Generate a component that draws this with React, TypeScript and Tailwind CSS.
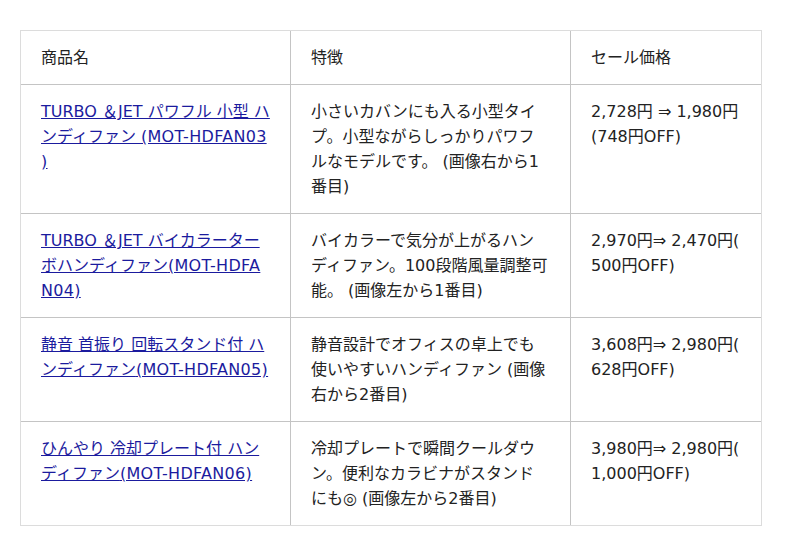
import React from "react";

type Row = { name: string; code: string; feature: string; price: string };

const rows: Row[] = [
  {
    name: "TURBO ＆JET パワフル 小型 ハンディファン ",
    code: "(MOT-HDFAN03)",
    feature: "小さいカバンにも入る小型タイプ。小型ながらしっかりパワフルなモデルです。 (画像右から1番目)",
    price: "2,728円 ⇒ 1,980円 (748円OFF)",
  },
  {
    name: "TURBO ＆JET バイカラーターボハンディファン",
    code: "(MOT-HDFAN04)",
    feature: "バイカラーで気分が上がるハンディファン。100段階風量調整可能。 (画像左から1番目)",
    price: "2,970円⇒ 2,470円(500円OFF)",
  },
  {
    name: "静音 首振り 回転スタンド付 ハンディファン",
    code: "(MOT-HDFAN05)",
    feature: "静音設計でオフィスの卓上でも使いやすいハンディファン (画像右から2番目)",
    price: "3,608円⇒ 2,980円(628円OFF)",
  },
  {
    name: "ひんやり 冷却プレート付 ハンディファン",
    code: "(MOT-HDFAN06)",
    feature: "冷却プレートで瞬間クールダウン。便利なカラビナがスタンドにも◎ (画像左から2番目)",
    price: "3,980円⇒ 2,980円(1,000円OFF)",
  },
];

const c1 = "bg-white pl-5 pr-5 py-[14px] break-all [line-break:anywhere]";
const c2 = "bg-white px-5 py-[14px] break-all";
const c3 = "bg-white pl-5 pr-5 py-[14px] break-all [line-break:anywhere]";

export default function App() {
  return (
    <div className="min-h-[556px] w-[800px] bg-white pl-[20px] pt-[30px] font-['DejaVu_Sans','Noto_Sans_CJK_JP',sans-serif] text-[16px] leading-[25px] text-[#222]">
      <div className="w-[742px] border border-[#dcdcdc]">
        <div className="grid grid-cols-[269px_279px_190px] gap-px bg-[#c4c4c4]">
          <div className={c1}>商品名</div>
          <div className={c2}>特徴</div>
          <div className={c3}>セール価格</div>
          {rows.map((r, i) => (
            <React.Fragment key={i}>
              <div className={c1}>
                <a href="#" className="text-[#1b1b9e] underline">
                  {r.name}
                  <span className="tracking-[0.3px]">{r.code}</span>
                </a>
              </div>
              <div className={c2}>{r.feature}</div>
              <div className={c3}>{r.price}</div>
            </React.Fragment>
          ))}
        </div>
      </div>
    </div>
  );
}
